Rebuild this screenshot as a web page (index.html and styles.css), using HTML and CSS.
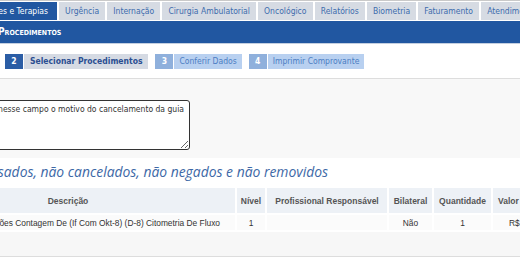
FILE: index.html
```html
<!DOCTYPE html>
<html>

<head>
    <meta charset="utf-8">
    <title>Procedimentos</title>
    <link rel="stylesheet" href="styles.css">
</head>

<body>

    <!-- menu tabs -->
    <div class="tabs">
        <div class="tab tab-active clip"><span>Exames e Terapias</span></div>
        <div class="tab">Urgência</div>
        <div class="tab">Internação</div>
        <div class="tab">Cirurgia Ambulatorial</div>
        <div class="tab">Oncológico</div>
        <div class="tab">Relatórios</div>
        <div class="tab">Biometria</div>
        <div class="tab">Faturamento</div>
        <div class="tab">Atendimento</div>
    </div>

    <div class="titlebar">Procedimentos</div>

    <!-- wizard steps -->
    <div class="steps">
        <div class="step step-on">
            <span class="step-num">2</span>
            <span class="step-label">Selecionar Procedimentos</span>
        </div>
        <div class="step">
            <span class="step-num">3</span>
            <span class="step-label">Conferir Dados</span>
        </div>
        <div class="step">
            <span class="step-num">4</span>
            <span class="step-label">Imprimir Comprovante</span>
        </div>
    </div>

    <div class="form-area">
        <div class="motivo-box clip">
            <textarea class="motivo" wrap="off">Informe nesse campo o motivo do cancelamento da guia</textarea>
        </div>
    </div>

    <div class="panel">
        <div class="section-title clip"><span>Procedimentos não processados, não cancelados, não negados e não removidos</span></div>

        <table class="grid">
            <colgroup>
                <col class="c-desc">
                <col class="c-nivel">
                <col class="c-prof">
                <col class="c-bil">
                <col class="c-qtd">
                <col class="c-valor">
            </colgroup>
            <tr>
                <th>Descrição</th>
                <th>Nível</th>
                <th>Profissional Responsável</th>
                <th>Bilateral</th>
                <th>Quantidade</th>
                <th class="valor">Valor</th>
            </tr>
            <tr>
                <td class="desc">Linfócitos T Subpopulações Contagem De (If Com Okt-8) (D-8) Citometria De Fluxo</td>
                <td>1</td>
                <td></td>
                <td>Não</td>
                <td>1</td>
                <td class="valor">R$ 0,00</td>
            </tr>
        </table>
    </div>

    <div class="footer"></div>

</body>

</html>
```

FILE: styles.css
```css
body {
    margin: 0;
    width: 520px;
    height: 257px;
    overflow: hidden;
    background-color: #f8f8f8;
    font-family: "DejaVu Sans Condensed", "DejaVu Sans", sans-serif;
}

/* cuts the start of a line, keeps the end */
.clip {
    display: flex;
    justify-content: flex-end;
    overflow: hidden;
    white-space: nowrap;
}

.tabs {
    display: flex;
    gap: 2px;
    height: 19px;
    padding-top: 1px;
    border-top: 1px solid #c9c9c9;
    background-color: #ffffff;
    overflow: hidden;
}

.tab {
    flex: none;
    height: 18px;
    line-height: 18px;
    padding: 0 6.1px;
    font-size: 8.5px;
    color: #3d6cad;
    background-color: #d6dbe3;
    white-space: nowrap;
}

.tab-active {
    width: 48px;
    padding: 0 9px 0 0;
    color: #ffffff;
    background-color: #2157a1;
}

.titlebar {
    height: 22px;
    line-height: 22px;
    text-indent: -2px;
    background-color: #2157a1;
    border-bottom: 1px solid #c3cfe0;
    color: #ffffff;
    font-size: 10px;
    font-weight: bold;
    font-variant: small-caps;
}

.steps {
    display: flex;
    gap: 7px;
    height: 24px;
    padding: 10px 0 0 5px;
    background-color: #ffffff;
    border-bottom: 1px solid #dddddd;
}

.step {
    display: flex;
    gap: 1px;
    height: 15px;
    line-height: 15px;
    font-size: 8.5px;
}

.step-num {
    width: 18px;
    text-align: center;
    font-weight: bold;
    color: #ffffff;
    background-color: #8fb0dc;
}

.step-label {
    padding: 0 5px;
    color: #4b7ec3;
    background-color: #b8d0f0;
}

.step-on .step-num {
    background-color: #2b5da5;
}

.step-on .step-label {
    padding: 0 6px;
    color: #2b4f92;
    font-weight: bold;
    background-color: #d5dae3;
}

.form-area {
    height: 58px;
    padding-top: 21px;
}

.motivo-box {
    width: 190px;
    height: 50px;
}

.motivo {
    flex: none;
    box-sizing: border-box;
    width: 229px;
    height: 50px;
    margin: 0;
    padding: 3px 4px;
    border: 1.5px solid #333333;
    border-radius: 3px;
    background-color: #ffffff;
    color: #333333;
    font-family: "DejaVu Sans Condensed", "DejaVu Sans", sans-serif;
    font-size: 8.5px;
    overflow: hidden;
    resize: vertical;
}

.panel {
    background-color: #ffffff;
    padding-top: 2px;
}

.section-title {
    width: 328px;
    height: 24px;
    line-height: 24px;
    color: #3d68a6;
    font-family: "Open Sans", sans-serif;
    font-size: 13.9px;
    font-style: italic;
}

.grid {
    table-layout: fixed;
    width: 644px;
    margin: 2px 0 0 -101px;
    border-spacing: 2px;
    font-family: "Liberation Sans", Arial, sans-serif;
    font-size: 8.4px;
}

.c-desc { width: 334px; }
.c-nivel { width: 28px; }
.c-prof { width: 120px; }
.c-bil { width: 43px; }
.c-qtd { width: 57px; }
.c-valor { width: 60px; }

.grid th {
    height: 25px;
    padding: 0;
    background-color: #edf1f6;
    color: #555555;
    font-weight: bold;
    font-size: 8.5px;
    white-space: nowrap;
    text-align: center;
}

.grid td {
    height: 15px;
    padding: 0;
    background-color: #fbfbfb;
    color: #333333;
    text-align: center;
    white-space: nowrap;
    overflow: hidden;
}

.grid .desc {
    text-align: right;
    padding-right: 15px;
}

.grid th.valor {
    text-align: left;
    padding-left: 5px;
}

.grid td.valor {
    text-align: left;
    padding-left: 16px;
}

.footer {
    height: 24px;
    background-color: #f7f7f7;
    border-bottom: 1px solid #dddddd;
}
```
